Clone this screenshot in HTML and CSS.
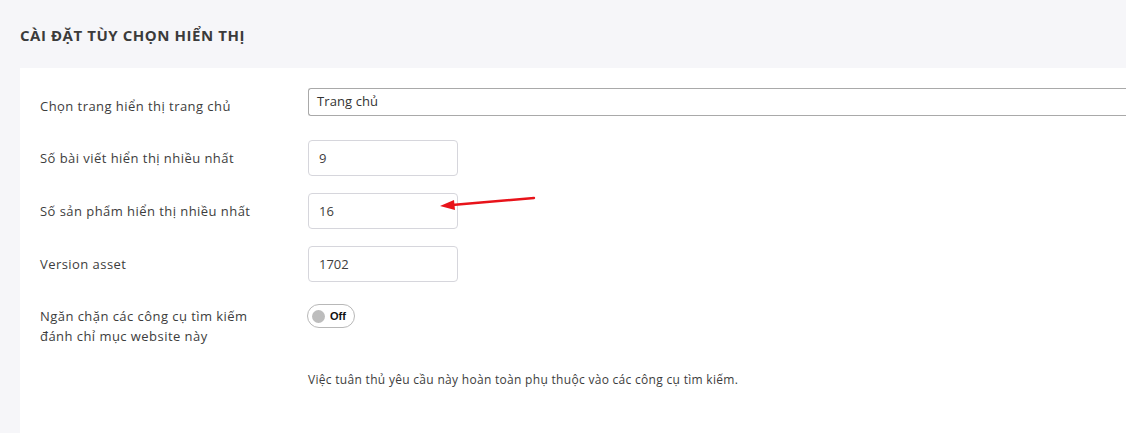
FILE: index.html
```html
<!DOCTYPE html>
<html lang="vi">
<head>
    <meta charset="utf-8">
    <title>Cài đặt tùy chọn hiển thị</title>
    <link rel="stylesheet" href="styles.css">
</head>
<body>
    <h2 class="page-title">CÀI ĐẶT TÙY CHỌN HIỂN THỊ</h2>

    <div class="card">
        <div class="form-row">
            <label class="form-label">Chọn trang hiển thị trang chủ</label>
            <div class="select-box">Trang chủ</div>
        </div>

        <div class="form-row">
            <label class="form-label">Số bài viết hiển thị nhiều nhất</label>
            <input class="text-input" type="text" value="9">
        </div>

        <div class="form-row">
            <label class="form-label">Số sản phẩm hiển thị nhiều nhất</label>
            <div class="input-wrap">
                <input class="text-input" type="text" value="16">
                <!-- red pointer drawn over the field -->
                <svg class="pointer" width="100" height="20" viewBox="0 0 100 20">
                    <line x1="96" y1="3" x2="14" y2="10" stroke="#e8131a" stroke-width="2.4" stroke-linecap="round"/>
                    <polygon points="2,11 16,5 17,15" fill="#e8131a"/>
                </svg>
            </div>
        </div>

        <div class="form-row">
            <label class="form-label">Version asset</label>
            <input class="text-input" type="text" value="1702">
        </div>

        <div class="form-row top">
            <label class="form-label">Ngăn chặn các công cụ tìm kiếm<br>đánh chỉ mục website này</label>
            <div class="toggle">
                <span class="knob"></span>
                <span class="toggle-text">Off</span>
            </div>
        </div>

        <p class="help-text">Việc tuân thủ yêu cầu này hoàn toàn phụ thuộc vào các công cụ tìm kiếm.</p>
    </div>
</body>
</html>
```

FILE: styles.css
```css
body { margin: 0; background: #f6f6f9; font-family: "Open Sans", Arial, sans-serif; color: #3a3a3a; overflow: hidden; }
.page-title { margin: 0; padding: 25px 20px 0; height: 43px; font-size: 15px; font-weight: 700; color: #3b3b3b; letter-spacing: 0.55px; }
.card { margin-left: 20px; background: #fff; padding: 20px 0 20px 20px; min-height: 325px; }
.form-row { display: flex; align-items: center; margin-bottom: 17px; }
.form-row.top { align-items: flex-start; margin-top: 22px; }
.form-row.top .form-label { padding-top: 2px; }
.form-label { width: 268px; flex-shrink: 0; font-size: 13px; line-height: 20px; color: #3d3d3d; letter-spacing: 0.45px; }
.select-box { flex: 1; height: 26px; border: 1px solid #a9a9a9; border-right: none; border-radius: 3px 0 0 3px; padding-left: 8px; font-size: 13px; line-height: 25px; color: #333; margin-bottom: 7px; letter-spacing: 0.1px; }
.text-input { width: 150px; height: 36px; box-sizing: border-box; border: 1px solid #d6d6dc; border-radius: 4px; padding: 0 10px; font-family: inherit; font-size: 13px; color: #3d3d3d; }
.input-wrap { position: relative; }
.pointer { position: absolute; left: 130px; top: 2px; }
.toggle { display: flex; align-items: center; width: 46px; height: 22px; border: 1px solid #b8b8b8; border-radius: 12px; margin-left: -1px; }
.knob { width: 13px; height: 13px; border-radius: 50%; background: #bdbdbd; margin-left: 4px; }
.toggle-text { font-size: 11px; font-weight: 700; color: #111; margin-left: 5px; font-family: "Liberation Sans", Arial, sans-serif; }
.help-text { margin: 25px 0 0 268px; font-size: 12px; color: #3d3d3d; letter-spacing: 0.3px; }
```
